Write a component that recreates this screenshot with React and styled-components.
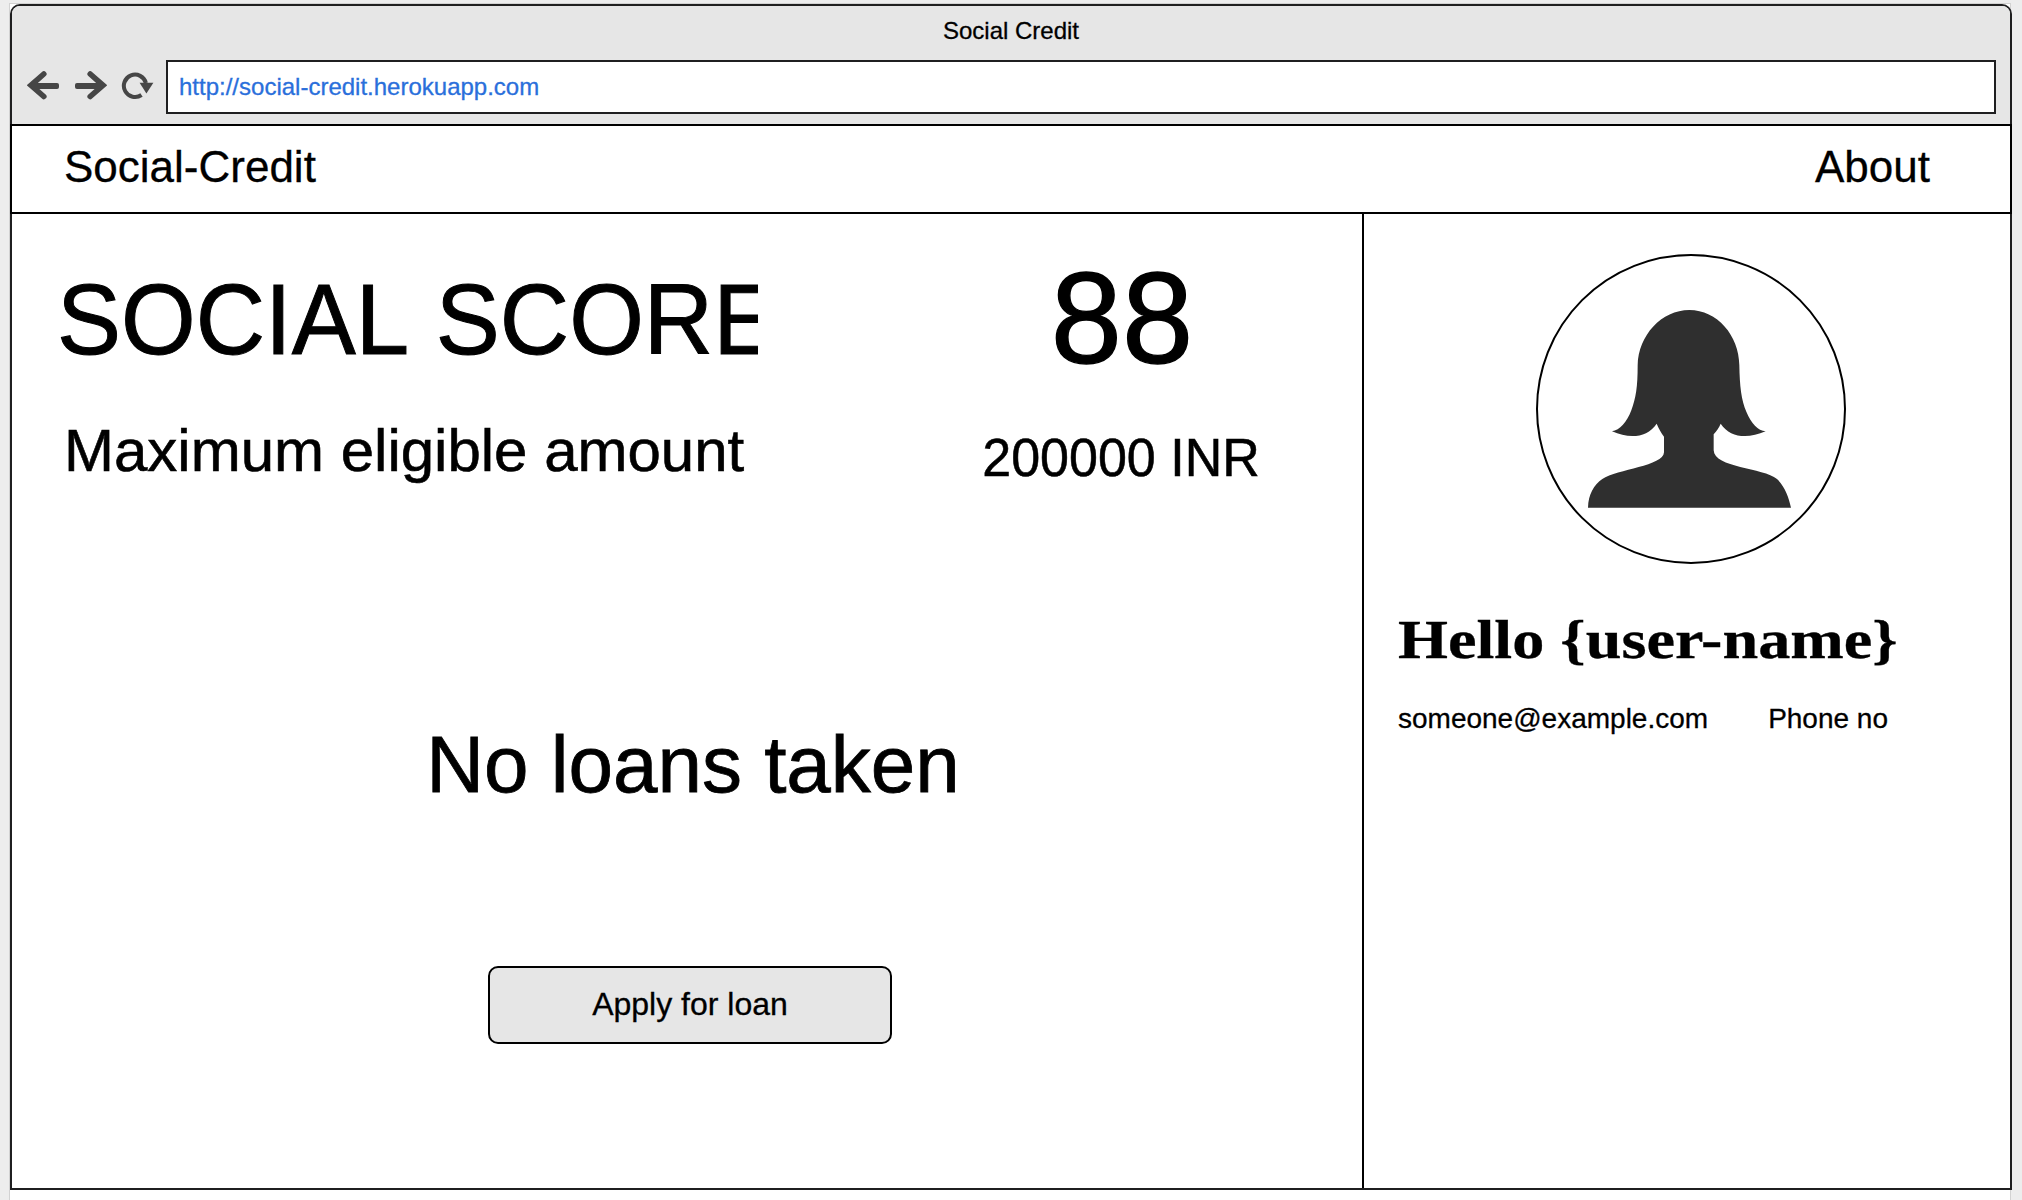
import React from 'react';
import styled, { createGlobalStyle } from 'styled-components';

const GlobalStyle = createGlobalStyle`
  *, *::before, *::after { box-sizing: border-box; }
  body {
    margin: 0;
    background: #ededed;
    color: #000;
    font-family: "Liberation Sans", Arial, Helvetica, sans-serif;
    font-kerning: none;
    -webkit-text-stroke: 0.3px currentColor;
    overflow: hidden;
  }
`;

const Canvas = styled.div`
  width: 2002px;
  height: 1197px;
  margin: 3px 0 0 9px;
  border: 1px solid #d2d2d2;
  border-bottom: 0;
  background: #fff;
`;

const BrowserWindow = styled.div`
  display: flex;
  flex-direction: column;
  width: 2002px;
  height: 1186px;
  border: 2px solid #1f1f20;
  border-radius: 10px 10px 0 0;
  background: #fff;
`;

const Chrome = styled.header`
  flex: none;
  height: 118px;
  border-radius: 8px 8px 0 0;
  background: #e6e6e6;
`;

const WindowTitle = styled.div`
  height: 54px;
  line-height: 50px;
  font-size: 24px;
  text-align: center;
`;

const Toolbar = styled.div`
  display: flex;
  height: 54px;
  padding-right: 14px;
`;

const NavButtons = styled.div`
  display: flex;
  align-items: center;
  gap: 14px;
  width: 154px;
  padding: 0 0 2px 15px;
`;

const Icon = styled.svg`
  display: block;
  flex: none;
  color: #464646;
`;

const AddressBar = styled.div`
  flex: 1;
  padding-left: 11px;
  border: 2px solid #1f1f20;
  background: #fff;
  color: #2a6fdb;
  font-size: 24px;
  line-height: 50px;
`;

const NavBar = styled.nav`
  flex: none;
  display: flex;
  justify-content: space-between;
  height: 90px;
  margin: 0 -2px;
  padding: 0 80px 0 52px;
  border: 2px solid #000;
  font-size: 44px;
  line-height: 82px;
`;

const Columns = styled.main`
  flex: 1;
  display: grid;
  grid-template-columns: 1352px 1fr;
`;

const LoanPane = styled.section`
  display: flex;
  flex-direction: column;
  border-right: 2px solid #000;
  padding-top: 27px;
`;

const ScoreGrid = styled.div`
  display: grid;
  grid-template-columns: 702px 481px;
  grid-template-rows: 159px 102px;
  column-gap: 123px;
  align-items: center;
  padding-left: 44px;
`;

const Figure = styled.div`
  padding: ${(p) => p.$pad || 0};
  font-size: ${(p) => p.$size}px;
  line-height: 1.2;
  text-align: ${(p) => p.$align || 'left'};
  white-space: nowrap;
  overflow: ${(p) => (p.$clip ? 'hidden' : 'visible')};
  -webkit-text-stroke: 0.01em currentColor;
`;

/* Capitals and numerals are drawn slightly taller, growing up from the baseline. */
const Tall = styled.span`
  display: inline-block;
  transform: scaleY(${(p) => p.$stretch || 1.04});
  transform-origin: 50% calc(50% + 0.3465em);
`;

const LoanStatus = styled.div`
  display: flex;
  flex-direction: column;
  align-items: center;
  gap: 151px;
  margin-top: 213px;
  padding-left: 6px;
`;

const EmptyMessage = styled.div`
  padding-left: 6px;
  font-size: 80px;
  line-height: 100px;
  -webkit-text-stroke: 0.01em currentColor;
`;

const ApplyButton = styled.button`
  width: 404px;
  height: 78px;
  padding: 0 0 2px;
  border: 2px solid #000;
  border-radius: 10px;
  background: #e6e6e6;
  color: #000;
  font: 32px "Liberation Sans", Arial, sans-serif;
`;

const ProfilePane = styled.aside`
  padding: 40px 0 0 34px;
`;

const Avatar = styled.div`
  width: 310px;
  height: 310px;
  margin-left: 138px;
  border: 2px solid #000;
  border-radius: 50%;
`;

const Greeting = styled.h1`
  width: max-content;
  margin: 41px 0 24px;
  font: bold 55px/70px "Liberation Serif", Georgia, serif;
  transform: scaleX(1.168);
  transform-origin: 0 50%;
`;

const Contacts = styled.div`
  display: flex;
  gap: 60px;
  font-size: 28px;
  line-height: 40px;
`;

const ArrowIcon = ({ flip }) => (
  <Icon width="33" height="34" viewBox="0 0 33 34">
    <g transform={flip ? 'translate(33 0) scale(-1 1)' : undefined}>
      <path d="M16.8 5 L4 16.3 L16.8 27.5" fill="none" stroke="currentColor" strokeWidth="5.6" strokeLinecap="round" strokeLinejoin="miter" />
      <rect x="4" y="14" width="28" height="6" rx="2" fill="currentColor" />
    </g>
  </Icon>
);

const ReloadIcon = () => (
  <Icon width="33" height="34" viewBox="0 0 33 34">
    <path d="M20.5 26 A11.2 11.2 0 1 1 24.9 14" fill="none" stroke="currentColor" strokeWidth="4" />
    <path d="M18.6 13.8 H32.4 L25.4 24.4 Z" fill="currentColor" />
  </Icon>
);

const Silhouette = () => (
  <svg width="306" height="306" viewBox="54 48 918 918" display="block">
    <path
      fill="#2f2f2f"
      d="M508 210 C591 210 657 286 658 376 C659 438 664 481 679 515 C694 551 714 572 737 574 C683 597 631 594 602 551 C597 564 589 574 581 583 V631 C582 684 730 683 771 717 C795 740 806 772 813 803 H204 C205 763 222 734 247 717 C292 688 431 678 432 637 V590 C423 578 416 565 410 551 C381 594 328 597 276 574 C299 571 321 546 334 511 C348 474 353 441 353 376 C355 286 425 210 508 210 Z"
    />
  </svg>
);

export default function App() {
  return (
    <>
      <GlobalStyle />
      <Canvas>
        <BrowserWindow>
          <Chrome>
            <WindowTitle>Social Credit</WindowTitle>
            <Toolbar>
              <NavButtons>
                <ArrowIcon />
                <ArrowIcon flip />
                <ReloadIcon />
              </NavButtons>
              <AddressBar>http://social-credit.herokuapp.com</AddressBar>
            </Toolbar>
          </Chrome>
          <NavBar>
            <span>Social-Credit</span>
            <span>About</span>
          </NavBar>
          <Columns>
            <LoanPane>
              <ScoreGrid>
                <Figure $size={96} $clip $pad="0 0 0 1px"><Tall>SOCIAL SCORE</Tall></Figure>
                <Figure $size={128} $align="center" $pad="0 0 3px 1px"><Tall $stretch={1.015}>88</Tall></Figure>
                <Figure $size={60} $pad="0 0 0 8px">Maximum eligible amount</Figure>
                <Figure $size={52} $align="center" $pad="14px 1px 0 0"><Tall $stretch={1.03}>200000 INR</Tall></Figure>
              </ScoreGrid>
              <LoanStatus>
                <EmptyMessage>No loans taken</EmptyMessage>
                <ApplyButton>Apply for loan</ApplyButton>
              </LoanStatus>
            </LoanPane>
            <ProfilePane>
              <Avatar><Silhouette /></Avatar>
              <Greeting>Hello {'{user-name}'}</Greeting>
              <Contacts>
                <span>someone@example.com</span>
                <span>Phone no</span>
              </Contacts>
            </ProfilePane>
          </Columns>
        </BrowserWindow>
      </Canvas>
    </>
  );
}
